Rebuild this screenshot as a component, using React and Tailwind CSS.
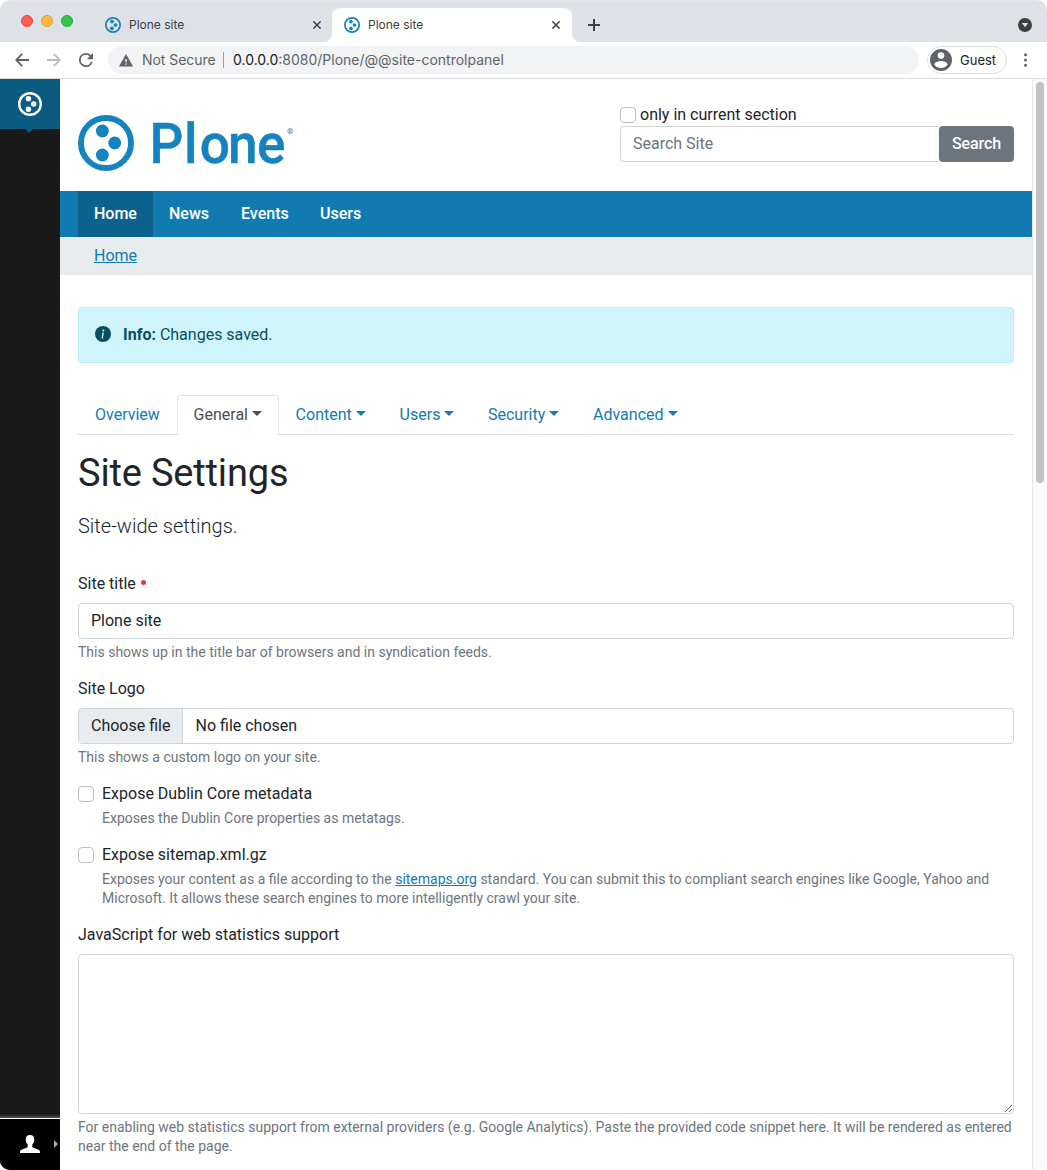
import React from "react";

function PloneMark({ className, ring = 10 }) {
  return (
    <svg viewBox="0 0 100 100" className={className} fill="currentColor">
      <circle cx="50" cy="50" r={50 - ring / 2} fill="none" stroke="currentColor" strokeWidth={ring} />
      <circle cx="43.5" cy="28.5" r="11.5" />
      <circle cx="65.5" cy="50" r="11.5" />
      <circle cx="43.5" cy="71.5" r="11.5" />
    </svg>
  );
}

function CloseIcon() {
  return (
    <svg viewBox="0 0 8 8" className="h-2 w-2" stroke="#3c4043" strokeWidth="1.5">
      <path d="M0.4 0.4 7.6 7.6M7.6 0.4 0.4 7.6" />
    </svg>
  );
}

function BrowserTab({ active }) {
  return (
    <div
      className={
        active
          ? "mt-2 flex h-[34px] w-60 items-center rounded-t-lg bg-white pl-3 pr-3"
          : "mt-2 flex h-[34px] w-[239px] items-center pl-3 pr-[11px]"
      }
    >
      <PloneMark className="h-4 w-4 text-[#1583bd]" ring={11} />
      <span className="ml-2 flex-1 font-[Inter] text-xs text-[#3c4043]">Plone site</span>
      <CloseIcon />
    </div>
  );
}

function TabStrip() {
  return (
    <div className="flex h-[42px] rounded-t-[10px] border-t border-[#e4e7ea] bg-[#dee1e6]">
      <div className="ml-[21px] mt-[14px] flex h-3 w-[72px] gap-2">
        <i className="h-3 w-3 rounded-full border border-[#e2463f] bg-[#fc5b57]" />
        <i className="h-3 w-3 rounded-full border border-[#dfa035] bg-[#fdba3f]" />
        <i className="h-3 w-3 rounded-full border border-[#27a835] bg-[#34c648]" />
      </div>
      <div className="-mt-px flex">
        <BrowserTab />
        <div className="-ml-2 flex items-end">
          <div className="h-2 w-2 bg-white">
            <div className="h-2 w-2 rounded-br-lg bg-[#dee1e6]" />
          </div>
          <BrowserTab active />
          <div className="h-2 w-2 bg-white">
            <div className="h-2 w-2 rounded-bl-lg bg-[#dee1e6]" />
          </div>
        </div>
      </div>
      <svg viewBox="0 0 12 12" className="ml-2 mt-[18px] h-3 w-3" stroke="#3c4043" strokeWidth="2">
        <path d="M6 0v12M0 6h12" />
      </svg>
      <svg viewBox="0 0 14 14" className="ml-auto mr-[15px] mt-[17px] h-[14px] w-[14px]">
        <circle cx="7" cy="7" r="7" fill="#3c4043" />
        <path d="M3.8 5h6.4L7 9.3z" fill="#dee1e6" />
      </svg>
    </div>
  );
}

function Toolbar() {
  return (
    <div className="flex h-[37px] items-center border-b border-[#d8dadd] bg-white font-[Inter]">
      <svg viewBox="0 0 14 14" className="ml-[15px] h-[14px] w-[14px]" fill="none" stroke="#5f6368" strokeWidth="1.8">
        <path d="M14 7H1.4M7.2.8 1.2 7l6 6.2" />
      </svg>
      <svg viewBox="0 0 14 14" className="ml-[18px] h-[14px] w-[14px]" fill="none" stroke="#babcbe" strokeWidth="1.8">
        <path d="M0 7h12.6M6.8.8l6 6.2-6 6.2" />
      </svg>
      <svg viewBox="4 4 16 16" className="ml-[18px] h-[14px] w-[14px]" fill="#5f6368">
        <path d="M17.65 6.35A7.96 7.96 0 0 0 12 4a8 8 0 1 0 7.73 10h-2.08A6 6 0 1 1 12 6c1.66 0 3.14.69 4.22 1.78L13 11h7V4z" />
      </svg>
      <div className="ml-[15px] flex h-7 w-[811px] items-center rounded-full bg-[#f1f3f4] pl-[11px] text-sm text-[#5f6368]">
        <svg viewBox="0 0 14 13" className="h-[13px] w-[14px]">
          <path d="M7 0 14 12.5H0z" fill="#5f6368" />
          <path d="M6.3 5h1.4v3.3H6.3zM6.3 9.4h1.4v1.4H6.3z" fill="#f1f3f4" />
        </svg>
        <span className="ml-[9px] w-[74px] whitespace-nowrap tracking-[-0.05px]">Not Secure</span>
        <i className="ml-[7px] mr-[9px] h-4 w-px bg-[#9a9da1]" />
        <span className="whitespace-nowrap">
          <span className="text-[#202124]">0.0.0.0</span>:8080/Plone/@@site-controlpanel
        </span>
      </div>
      <div className="ml-2 flex h-7 w-20 items-center rounded-full border border-[#dddfe2] pl-0.5 text-[13px] text-[#202124]">
        <svg viewBox="2 2 20 20" className="h-[22px] w-[22px]" fill="#5f6368">
          <path d="M12 2a10 10 0 1 0 0 20 10 10 0 0 0 0-20zm0 3a3 3 0 1 1 0 6 3 3 0 0 1 0-6zm0 14.2A7.2 7.2 0 0 1 6 16c.03-2 4-3.1 6-3.1s5.97 1.1 6 3.1a7.2 7.2 0 0 1-6 3.2z" />
        </svg>
        <span className="ml-2 mt-px">Guest</span>
      </div>
      <svg viewBox="0 0 4 14" className="ml-[17px] h-[14px] w-1" fill="#5f6368">
        <circle cx="1.500" cy="1.8" r="1.5" />
        <circle cx="1.500" cy="7" r="1.5" />
        <circle cx="1.500" cy="12.2" r="1.5" />
      </svg>
    </div>
  );
}

function Sidebar() {
  return (
    <aside className="flex w-[60px] flex-col overflow-hidden rounded-bl-[10px] bg-[#191919]">
      <div className="flex h-[50px] items-center justify-center bg-[#0b5a80] text-white">
        <PloneMark className="h-6 w-6" ring={10} />
      </div>
      <svg viewBox="0 0 8 4" className="ml-[25px] h-1 w-2">
        <path d="M0 0h8L4 4z" fill="#0b5a80" />
      </svg>
      <div className="mt-auto h-1 bg-gradient-to-b from-[#191919] to-[#555]" />
      <div className="flex h-[52px] items-center border-t border-white bg-black">
        <svg viewBox="0 0 20 18" className="-mt-0.5 ml-5 h-[18px] w-5" fill="#fff">
          <path d="M10 0C7.300 0 5.700 1.500 5.700 4.300c0 2.200.7 4.100 2 5.300v2.400C7.200 13.300.800 13.700 0 16.500V18h20v-1.500c-.8-2.800-7.200-3.200-7.700-4.500V9.600c1.300-1.200 2-3.100 2-5.300C14.300 1.500 12.700 0 10 0z" />
        </svg>
        <svg viewBox="0 0 4 8" className="-mt-0.5 ml-[14px] h-2 w-1">
          <path d="M0 0l4 4-4 4z" fill="#aaa" />
        </svg>
      </div>
    </aside>
  );
}

function Header() {
  return (
    <header className="flex h-28 justify-between px-[18px]">
      <div className="mt-9 flex h-14 text-[#1583bd]">
        <PloneMark className="h-14 w-14" ring={10.5} />
        <svg viewBox="0 0 137 56" className="ml-4 h-14 w-[137px] overflow-visible" fill="currentColor">
          <text
            x="-0.600 35.900 52.400 82 112.600"
            y="47.700"
            transform="scale(.95 1)"
            fontFamily="Roboto"
            fontSize="56"
            fontWeight="500"
            stroke="currentColor"
            strokeWidth="0.4"
          >
            Plone
          </text>
        </svg>
        <span className="mt-[11px] text-[8px] font-bold leading-3">®</span>
      </div>
      <div className="mt-6 w-[394px]">
        <label className="flex h-[23px] items-center">
          <Check />
          <span className="ml-1">only in current section</span>
        </label>
        <div className="flex h-9">
          <div className="flex-1 rounded-l border border-r-0 border-[#ced4da] px-3 leading-[34px] text-[#6c757d]">Search Site</div>
          <button className="w-[75px] rounded bg-[#6c757d] font-medium leading-9 tracking-[-0.1px] text-white">Search</button>
        </div>
      </div>
    </header>
  );
}

function Check() {
  return <span className="block h-4 w-4 shrink-0 rounded border border-[#bfbfbf] bg-white" />;
}

function Caret() {
  return (
    <i className="ml-1 inline-block border-x-[5px] border-t-[5px] border-x-transparent border-t-current align-[4px]" />
  );
}

function Help({ children, className = "" }) {
  return <p className={"text-sm leading-[19px] text-[#6c757d] " + className}>{children}</p>;
}

function Main() {
  return (
    <main className="px-[18px]">
      <div className="mt-8 flex h-14 items-center rounded border border-[#b6effb] bg-[#cff4fc] pl-4 text-[#055160]">
        <svg viewBox="0 0 16 16" className="-mt-0.5 h-4 w-4">
          <circle cx="8" cy="8" r="8" fill="currentColor" />
          <path d="m8.900 6.600-2.200.28-.1.360.5.080c.3.070.35.180.28.500l-.75 3.470c-.18.900.1 1.320.8 1.320.52 0 1.100-.24 1.400-.56l.08-.4c-.2.170-.47.230-.65.230-.27 0-.36-.18-.3-.5z" fill="#cff4fc" />
          <circle cx="8.300" cy="4.500" r="1" fill="#cff4fc" />
        </svg>
        <span className="ml-3">
          <b>Info:</b> Changes saved.
        </span>
      </div>

      <nav className="mt-8 flex h-10 border-b border-[#dee2e6] text-[#117bb1]">
        <a className="w-[99px] pl-[17px] leading-[39px]">Overview</a>
        <a className="h-10 w-[102px] rounded-t border border-b-0 border-[#dee2e6] bg-white pl-[15.6px] leading-[37px] text-[#495057]">
          General<Caret />
        </a>
        <a className="w-[104px] pl-[16.6px] leading-[39px]">Content<Caret /></a>
        <a className="w-[88px] pl-[16.6px] leading-[39px]">Users<Caret /></a>
        <a className="w-[105px] pl-[17px] leading-[39px]">Security<Caret /></a>
        <a className="pl-[17px] leading-[39px]">Advanced<Caret /></a>
      </nav>

      <h1 className="mt-3.5 text-[38px] leading-[48px] tracking-[-0.17px]">Site Settings</h1>
      <p className="mt-3.5 text-xl font-light leading-[30px]">Site-wide settings.</p>

      <div className="mt-[31px] flex h-6 items-center">
        Site title
        <i className="ml-[5px] mt-[-3px] h-[5px] w-[5px] rounded-full bg-[#dc3545]" />
      </div>
      <div className="mt-[7px] h-9 rounded border border-[#ced4da] px-3 leading-[34px]">Plone site</div>
      <Help className="mt-1">This shows up in the title bar of browsers and in syndication feeds.</Help>

      <div className="mt-[15px] h-6 leading-6">Site Logo</div>
      <div className="mt-[7px] flex h-9 overflow-hidden rounded border border-[#ced4da] leading-[34px]">
        <span className="w-[104px] border-r border-[#ced4da] bg-[#e9ecef] pl-3">Choose file</span>
        <span className="pl-[12.5px]">No file chosen</span>
      </div>
      <Help className="mt-1">This shows a custom logo on your site.</Help>

      <label className="mt-[15px] flex h-6 items-center gap-2">
        <Check />
        Expose Dublin Core metadata
      </label>
      <Help className="ml-6 mt-[3px]">Exposes the Dublin Core properties as metatags.</Help>
      <label className="mt-[15px] flex h-6 items-center gap-2">
        <Check />
        Expose sitemap.xml.gz
      </label>
      <Help className="ml-6 mt-[3px]">
        Exposes your content as a file according to the <a className="text-[#117bb1] underline">sitemaps.org</a> standard. You can
        submit this to compliant search engines like Google, Yahoo and
        <br />
        Microsoft. It allows these search engines to more intelligently crawl your site.
      </Help>

      <div className="mt-[15px] h-6 leading-6">JavaScript for web statistics support</div>
      <textarea className="mt-[7px] block h-40 w-full resize rounded border border-[#ced4da] bg-white" />
      <Help className="mt-1">
        For enabling web statistics support from external providers (e.g. Google Analytics). Paste the provided code snippet here. It
        will be rendered as entered
        <br />
        near the end of the page.
      </Help>
    </main>
  );
}

export default function App() {
  return (
    <div className="flex h-[1170px] w-[1047px] flex-col overflow-hidden bg-white font-[Roboto,sans-serif] text-base text-[#212529]">
      <TabStrip />
      <Toolbar />
      <div className="flex min-h-0 flex-1">
        <Sidebar />
        <div className="w-[972px]">
          <Header />
          <nav className="flex h-[46px] bg-[#117bb1] pl-[18px] font-medium leading-[45px] text-white">
            <a className="w-[75px] bg-[#0c628d] pl-4">Home</a>
            <a className="w-[72px] pl-4">News</a>
            <a className="w-[79px] pl-4">Events</a>
            <a className="pl-4">Users</a>
          </nav>
          <div className="h-[38px] bg-[#e9ecef] pl-[34px] leading-[37px]">
            <a className="text-[#117bb1] underline">Home</a>
          </div>
          <Main />
        </div>
        <div className="flex w-[15px] justify-center rounded-br-[10px] border-l border-[#e6e6e6] bg-[#fafafa]">
          <i className="mt-[3px] h-[401px] w-2 rounded-full bg-[#c1c1c1]" />
        </div>
      </div>
    </div>
  );
}
